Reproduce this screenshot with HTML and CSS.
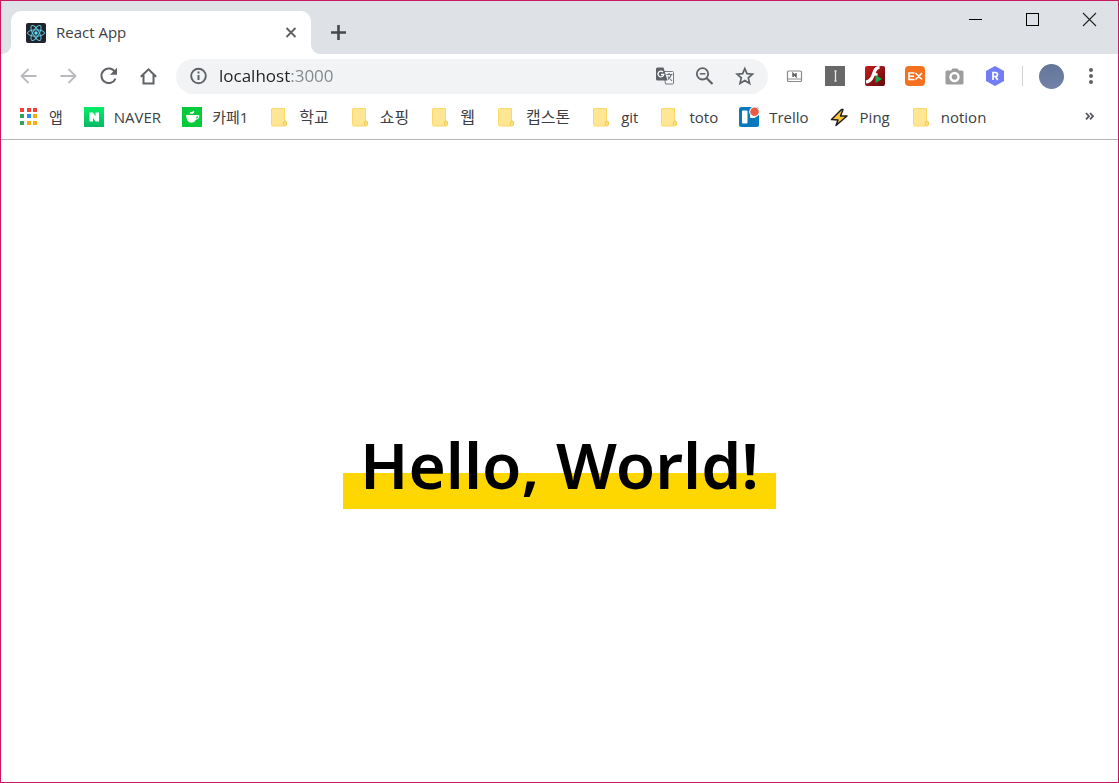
FILE: index.html
```html
<!DOCTYPE html>
<html lang="ko">
<head>
<meta charset="utf-8">
<title>React App</title>
<link rel="stylesheet" href="styles.css">
</head>
<body>
<svg class="defs" aria-hidden="true">
  <symbol id="folder" viewBox="0 0 20 20">
    <path d="M3 1.500h12.500v12.500q2 0 2 2v1.500q0 1.500-1.500 1.500H4q-1.500 0-1.500-1.500V2z" fill="#ffe694" stroke="#fbd966"/>
    <path d="M15.500 18.500q-1.500-.5-1.200-2.500.2-2 1.700-2t1.500 2-.8 2" fill="#ffe182" stroke="#eccb54"/>
  </symbol>
</svg>
<div class="window">
  <header class="tabstrip">
    <div class="lead"></div>
    <div class="tab">
      <svg class="favicon" viewBox="0 0 20 20"><rect width="20" height="20" rx="2" fill="#20232a"/><g fill="none" stroke="#61c5dd"><ellipse cx="10" cy="10" rx="8.500" ry="3.200"/><ellipse cx="10" cy="10" rx="8.500" ry="3.200" transform="rotate(60 10 10)"/><ellipse cx="10" cy="10" rx="8.500" ry="3.200" transform="rotate(120 10 10)"/></g><circle cx="10" cy="10" r="1.700" fill="#61dafb"/></svg>
      <span class="tab-title">React App</span>
      <button class="tab-close" aria-label="Close tab"><svg viewBox="0 0 20 20"><path d="M5.500 5l9 9m0-9l-9 9" fill="none" stroke="#5f6368" stroke-width="1.900"/></svg></button>
    </div>
    <div class="rest">
      <button class="new-tab" aria-label="New tab"><svg viewBox="0 0 20 20"><path d="M10.500 3v15M3 10.500h15" fill="none" stroke="#45494d" stroke-width="2.600"/></svg></button>
      <div class="controls">
        <button aria-label="Minimize"><svg viewBox="0 0 20 20"><path d="M3 10.500h13" stroke="#000"/></svg></button>
        <button aria-label="Maximize"><svg viewBox="0 0 20 20"><rect x="3.500" y="4.500" width="12" height="12" fill="none" stroke="#000"/></svg></button>
        <button aria-label="Close"><svg viewBox="0 0 20 20"><path d="M3 4l13 13m0-13l-13 13" fill="none" stroke="#222" stroke-width="1.100"/></svg></button>
      </div>
    </div>
  </header>

  <div class="toolbar">
    <nav class="nav">
      <button aria-label="Back"><svg viewBox="0 0 20 20"><path d="M17.500 10H2.500m7-7l-7 7 7 7" fill="none" stroke="#b8babd" stroke-width="1.800"/></svg></button>
      <button aria-label="Forward"><svg viewBox="0 0 20 20"><path d="M1.500 10h15m-7-7l7 7-7 7" fill="none" stroke="#b8babd" stroke-width="1.800"/></svg></button>
      <button aria-label="Reload"><svg viewBox="0 0 20 20"><path d="M16 6a7.300 7.300 0 1 0 .5 6.600" fill="none" stroke="#5f6368" stroke-width="2"/><path d="M18 1.800v7h-7z" fill="#5f6368"/></svg></button>
      <button aria-label="Home"><svg viewBox="0 0 20 20"><path d="M1.800 10.800L9.500 3.300l7.700 7.500M4.500 9v8.500h10V9" fill="none" stroke="#5f6368" stroke-width="2"/></svg></button>
    </nav>
    <div class="omnibox">
      <svg class="icon" viewBox="0 0 20 20"><circle cx="9.500" cy="10" r="7.300" fill="none" stroke="#5f6368" stroke-width="1.900"/><path d="M9.500 9v5M9.500 5.500v2" stroke="#5f6368" stroke-width="2"/></svg>
      <input class="url" type="text" aria-label="Address" value="localhost:3000">
      <div class="actions">
        <button aria-label="Translate"><svg viewBox="0 0 20 20"><path d="M8.500 5.500h9q1 0 1 1v10.500q0 1-1 1h-7z" fill="#f5f6f7" stroke="#777b80"/><path d="M2.500 1.500h6l4 13H2.500Q1 14.500 1 13V3q0-1.500 1.500-1.500z" fill="#5f6368"/><path d="M8 6a2.900 2.900 0 1 0 .8 2.500H6" fill="none" stroke="#fff" stroke-width="1.300"/><path d="M11.500 8.500h6M14 7v1.500M16.300 8.500q-.8 3-3.500 5M13 10.500l4 4.500" fill="none" stroke="#6d7175" stroke-width="1.100"/></svg></button>
        <button aria-label="Zoom"><svg viewBox="0 0 20 20"><circle cx="7.500" cy="7.800" r="5.700" fill="none" stroke="#5f6368" stroke-width="1.800"/><path d="M11.500 12l6 6" stroke="#5f6368" stroke-width="2.200"/><path d="M4.800 7.800h5.600" stroke="#5f6368" stroke-width="1.500"/></svg></button>
        <button aria-label="Bookmark this page"><svg viewBox="0 0 20 20"><path d="M9.800 2.600l2.200 5.100 5.500.5-4.200 3.700 1.300 5.500-4.800-2.900L5 17.400l1.300-5.500-4.200-3.700 5.500-.5z" fill="none" stroke="#5f6368" stroke-width="1.700"/></svg></button>
      </div>
    </div>
    <div class="extensions">
      <button aria-label="Screen extension"><svg viewBox="0 0 20 20"><rect x="2.500" y="5" width="14" height="10.500" rx="1" fill="#fff" stroke="#8b8b8b" stroke-width="1.200"/><path d="M3 13h13.500" stroke="#8b8b8b"/><path d="M8 11V7.500l3 3V7" fill="none" stroke="#555" stroke-width="1.400"/></svg></button>
      <button aria-label="Instapaper"><svg viewBox="0 0 20 20"><rect width="20" height="20" fill="#686868"/><path d="M10.500 5v10M9.500 5h2m-2 10h2" stroke="#e9e9e9" stroke-width="1.300"/></svg></button>
      <button aria-label="Flash"><svg viewBox="0 0 20 20"><defs><linearGradient id="fl" x2="1" y2="1"><stop stop-color="#c91c20"/><stop offset="1" stop-color="#5e0b0d"/></linearGradient></defs><rect width="20" height="20" rx="2" fill="url(#fl)"/><path d="M14.500 1.500C9 1.500 9.500 8 6.500 12.500q-2 3-5.500 3.500" fill="none" stroke="#fff" stroke-width="3.200"/><path d="M8 8.500h4.500" stroke="#fff" stroke-width="2.800"/><path d="M10.500 9l6.500 4-6.500 4z" fill="#18a94a"/></svg></button>
      <button aria-label="EX"><svg viewBox="0 0 20 20"><rect width="20" height="20" rx="4" fill="#f5701f"/><path d="M9.500 7H4v6.500h5.500M4 10.200h5M10.500 7l6.500 6.500m0-6.500l-6.500 6.500" fill="none" stroke="#fff" stroke-width="1.600"/></svg></button>
      <button aria-label="Capture"><svg viewBox="0 0 20 20"><path d="M2 4.500h4L7.500 2.500h5L14 4.500h3q1.500 0 1.500 1.500v11q0 1.500-1.500 1.500H2Q.5 18.500.5 17V6Q.5 4.500 2 4.500z" fill="#9d9d9d"/><circle cx="9.500" cy="11" r="4" fill="#9d9d9d" stroke="#fff" stroke-width="2.400"/></svg></button>
      <button aria-label="R extension"><svg viewBox="0 0 20 20"><path d="M10 0l9 5v10l-9 5-9-5V5z" fill="#717cf5"/><path d="M8 14V6.500h2.500q2 0 2 2t-2 2H8m2.500 0l2.200 3.500" fill="none" stroke="#fff" stroke-width="1.700"/></svg></button>
    </div>
    <button class="profile" aria-label="Profile"></button>
    <button class="menu" aria-label="Menu"><svg viewBox="0 0 20 20" fill="#5f6368"><circle cx="10" cy="4" r="2"/><circle cx="10" cy="10" r="2"/><circle cx="10" cy="16" r="2"/></svg></button>
  </div>

  <nav class="bookmarks">
    <a href="#"><svg viewBox="0 0 20 20"><path d="M1 1h4v4H1zM8 1h4v4H8zM14 1h4v4h-4z" fill="#f44336"/><path d="M1 7h4v4H1zM1 14h4v4H1z" fill="#34a361"/><path d="M8 7h4v4H8z" fill="#2490f5"/><path d="M14 7h4v4h-4zM14 14h4v4h-4zM8 14h4v4H8z" fill="#fbab16"/></svg>앱</a>
    <a href="#"><svg viewBox="0 0 20 20"><defs><linearGradient id="nv" x2="0" y2="1"><stop stop-color="#04ee65"/><stop offset="1" stop-color="#07b867"/></linearGradient></defs><rect width="20" height="20" fill="url(#nv)"/><path d="M5.500 5.500H9l2.500 4v-4H15v9h-3.500l-2.500-4v4H5.500z" fill="#fff"/></svg>NAVER</a>
    <a href="#"><svg viewBox="0 0 20 20"><rect width="20" height="20" fill="#05ca3c"/><path d="M4 8h11q3-.5 2.300 2-.8 2.500-3.500 3-1.300 2.800-4.300 2.800Q4.500 15.800 4 8z" fill="#fff"/><path d="M14.500 9.500q2-.5 1.500.7-.5 1.200-1.800 1.500z" fill="#05ca3c"/><path d="M7.500 6.500q0-1.500 2.500-1.700 1.500-.3 2-1.500 1 3.400-2 3.400z" fill="#fff"/></svg>카페1</a>
    <a class="hangul" href="#"><svg><use href="#folder"/></svg>학교</a>
    <a class="hangul" href="#"><svg><use href="#folder"/></svg>쇼핑</a>
    <a class="hangul" href="#"><svg><use href="#folder"/></svg>웹</a>
    <a class="hangul" href="#"><svg><use href="#folder"/></svg>캡스톤</a>
    <a href="#"><svg><use href="#folder"/></svg>git</a>
    <a href="#"><svg><use href="#folder"/></svg>toto</a>
    <a href="#"><svg viewBox="0 0 20 20"><rect width="20" height="20" rx="2.500" fill="#0779bf"/><rect x="3" y="3.500" width="5.500" height="13" rx="1" fill="#fff"/><path d="M11 8v2q0 1 1 1h3.500q1 0 1-1V8z" fill="#fff"/><circle cx="15.500" cy="4.800" r="5.300" fill="#fff"/><circle cx="15.500" cy="4.800" r="4.300" fill="#eb5a46"/></svg>Trello</a>
    <a href="#"><svg viewBox="0 0 20 20"><path d="M11.500 2.500L1.500 12.500l6.500.5-2 5.500L17 9h-6.500L13 2.500z" fill="#fdc534" stroke="#1f1f1f" stroke-width="1.500" stroke-linejoin="round"/></svg>Ping</a>
    <a href="#"><svg><use href="#folder"/></svg>notion</a>
    <button class="more" aria-label="More bookmarks"><svg viewBox="0 0 20 20"><path d="M6 6l3 3.200-3 3.200m4-6.400l3 3.200-3 3.200" fill="none" stroke="#54585d" stroke-width="1.800"/></svg></button>
  </nav>

  <main class="page"><h1>Hello, World!</h1></main>
</div>
</body>
</html>
```
FILE: styles.css
```css
* { box-sizing: border-box; }
body { margin: 0; font-family: "Open Sans", "Noto Sans CJK KR", sans-serif; color: #3c4043; }
.defs { position: absolute; width: 0; height: 0; }
button { border: 0; padding: 0; background: none; display: flex; align-items: center; justify-content: center; }
svg { display: block; width: 20px; height: 20px; flex: none; }

.window { min-height: 100vh; display: flex; flex-direction: column; border: 1px solid #c8185f; background: #fff; }

.tabstrip { display: flex; height: 53px; background: linear-gradient(#dee1e6 50%, #fff 50%); }
.lead { width: 10px; background: #dee1e6; border-bottom-right-radius: 9px; }
.tab { width: 300px; margin-top: 10px; padding: 0 10px 0 15px; display: flex; align-items: center; gap: 10px; background: #fff; border-radius: 10px 10px 0 0; box-shadow: 0 -10px 0 10px #dee1e6; clip-path: inset(-10px 0 0 0); }
.tab-title { flex: 1; padding-bottom: 2px; font-size: 15px; line-height: 20px; }
.rest { flex: 1; display: flex; justify-content: space-between; align-items: flex-start; background: #dee1e6; border-bottom-left-radius: 9px; }
.new-tab { width: 54px; height: 62px; }
.controls { display: flex; }
.controls button { width: 57px; height: 36px; }

.toolbar { display: flex; align-items: center; height: 44px; padding: 0 17px 0 18px; }
.nav { display: flex; gap: 20px; }
.omnibox { flex: 1; height: 35px; margin-left: 17px; padding: 0 13px; display: flex; align-items: center; gap: 10px; border-radius: 18px; background: #f1f3f4; }
.url { flex: 1; min-width: 0; border: 0; padding: 0; outline: 0; font: 17px/26px "Open Sans", sans-serif; color: transparent; background: linear-gradient(90deg, #202124 71px, #80868b 71px); -webkit-background-clip: text; background-clip: text; }
.actions { display: flex; gap: 20px; }
.extensions { display: flex; gap: 20px; margin-left: 17px; padding-right: 17px; border-right: 1px solid #d0d2d5; }
.profile { width: 25px; height: 25px; margin: 0 17px 0 16px; border-radius: 50%; background: linear-gradient(#637699, #7282a8); }

.bookmarks { display: flex; align-items: center; gap: 21px; height: 42px; padding: 0 18px 4px; border-bottom: 1px solid #b6b4b6; }
.bookmarks a { display: flex; align-items: center; gap: 10px; color: #3c4043; font-size: 15px; line-height: 22px; text-decoration: none; white-space: nowrap; }
.bookmarks .hangul { font-size: 16px; }
.more { margin-left: auto; }

.page { flex: 1; display: flex; align-items: center; justify-content: center; }
h1 { margin: 0; padding: 8px 17px 0; color: #000; font: 600 64px/88px "Noto Sans", sans-serif; background: linear-gradient(transparent 62.5%, #ffd700 62.5%); }
```
